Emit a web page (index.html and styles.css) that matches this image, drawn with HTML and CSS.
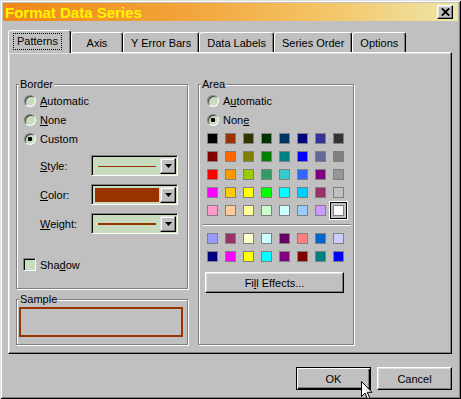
FILE: index.html
```html
<!DOCTYPE html>
<html lang="en">
<head>
    <meta charset="UTF-8">
    <title>Format Data Series</title>
    <link rel="stylesheet" href="styles.css">
</head>
<body>

    <div class="window">
        <!-- title bar -->
        <div class="titlebar">
            <span class="title">Format Data Series</span>
            <button class="close-btn">
                <svg width="9" height="8" viewBox="0 0 9 8"><path d="M0.8 0.3 L8.2 7.7 M8.2 0.3 L0.8 7.7" stroke="#000" stroke-width="1.8"/></svg>
            </button>
        </div>

        <div class="dialog">
            <div class="tabs">
                <div class="tab active"><span class="focus">Patterns</span></div>
                <div class="tab">Axis</div>
                <div class="tab">Y Error Bars</div>
                <div class="tab">Data Labels</div>
                <div class="tab">Series Order</div>
                <div class="tab">Options</div>
            </div>

            <div class="panel">
                <div class="col-left">
                    <fieldset class="group border-group">
                        <legend>Border</legend>
                        <div class="option"><span class="radio"></span><span><u>A</u>utomatic</span></div>
                        <div class="option"><span class="radio"></span><span><u>N</u>one</span></div>
                        <div class="option"><span class="radio checked"></span><span>Custom</span></div>

                        <div class="field-row first">
                            <span class="field-label"><u>S</u>tyle:</span>
                            <div class="combo">
                                <span class="combo-value"><span class="line thin"></span></span>
                                <span class="combo-btn"><svg width="7" height="4" viewBox="0 0 7 4"><polygon points="0,0 7,0 3.5,4" fill="#000"/></svg></span>
                            </div>
                        </div>
                        <div class="field-row">
                            <span class="field-label"><u>C</u>olor:</span>
                            <div class="combo">
                                <span class="combo-value"><span class="fill"></span></span>
                                <span class="combo-btn"><svg width="7" height="4" viewBox="0 0 7 4"><polygon points="0,0 7,0 3.5,4" fill="#000"/></svg></span>
                            </div>
                        </div>
                        <div class="field-row">
                            <span class="field-label"><u>W</u>eight:</span>
                            <div class="combo">
                                <span class="combo-value"><span class="line thick"></span></span>
                                <span class="combo-btn"><svg width="7" height="4" viewBox="0 0 7 4"><polygon points="0,0 7,0 3.5,4" fill="#000"/></svg></span>
                            </div>
                        </div>

                        <div class="option check-row"><span class="checkbox"></span><span>Sha<u>d</u>ow</span></div>
                    </fieldset>

                    <fieldset class="group sample-group">
                        <legend>Sample</legend>
                        <div class="sample"></div>
                    </fieldset>
                </div>

                <fieldset class="group area-group">
                    <legend>Area</legend>
                    <div class="option"><span class="radio"></span><span>A<u>u</u>tomatic</span></div>
                    <div class="option"><span class="radio checked"></span><span>Non<u>e</u></span></div>

                    <div class="swatches" id="main-colors"></div>
                    <div class="separator"></div>
                    <div class="swatches extra" id="extra-colors"></div>

                    <button class="btn fill-btn">Fi<u>l</u>l Effects...</button>
                </fieldset>
            </div>

            <div class="actions">
                <button class="btn default">OK</button>
                <button class="btn">Cancel</button>
            </div>
        </div>

        <!-- mouse pointer sitting over the OK button -->
        <svg class="cursor" width="12" height="19" viewBox="0 0 12 19">
            <path d="M0.5 0.5 V15.5 L4 12 L6.5 17.8 L8.7 16.9 L6.3 11.3 H11 Z" fill="#fff" stroke="#000" stroke-width="1"/>
        </svg>
    </div>

    <script>
        // Excel 56 colour palette, 5 rows + 2 chart rows
        const mainColors = [
            '#000000', '#993300', '#333300', '#003300', '#003366', '#000080', '#333399', '#333333',
            '#800000', '#FF6600', '#808000', '#008000', '#008080', '#0000FF', '#666699', '#808080',
            '#FF0000', '#FF9900', '#99CC00', '#339966', '#33CCCC', '#3366FF', '#800080', '#969696',
            '#FF00FF', '#FFCC00', '#FFFF00', '#00FF00', '#00FFFF', '#00CCFF', '#993366', '#C0C0C0',
            '#FF99CC', '#FFCC99', '#FFFF99', '#CCFFCC', '#CCFFFF', '#99CCFF', '#CC99FF', '#FFFFFF'
        ];
        const extraColors = [
            '#9999FF', '#993366', '#FFFFCC', '#CCFFFF', '#660066', '#FF8080', '#0066CC', '#CCCCFF',
            '#000080', '#FF00FF', '#FFFF00', '#00FFFF', '#800080', '#800000', '#008080', '#0000FF'
        ];

        function fillSwatches(containerId, colors, selected) {
            const box = document.getElementById(containerId);
            colors.forEach((color, i) => {
                const sw = document.createElement('span');
                sw.className = 'swatch';
                if (i === selected) sw.classList.add('selected');
                sw.style.background = color;
                box.appendChild(sw);
            });
        }

        fillSwatches('main-colors', mainColors, 39);
        fillSwatches('extra-colors', extraColors, -1);
    </script>

</body>
</html>
```

FILE: styles.css
```css
* {
    box-sizing: border-box;
}

body {
    margin: 0;
    font-family: "Liberation Sans", Arial, sans-serif;
    font-size: 11px;
    color: #000;
    background-color: #c0c0c0;
}

/* Outer window frame */
.window {
    position: relative;
    width: 461px;
    height: 399px;
    padding: 3px;
    background-color: #c0c0c0;
    box-shadow: inset 1px 1px 0 #dfdfdf, inset -1px -1px 0 #000,
                inset 2px 2px 0 #fff, inset -2px -2px 0 #808080;
    display: flex;
    flex-direction: column;
}

.titlebar {
    height: 18px;
    display: flex;
    align-items: center;
    justify-content: space-between;
    padding-left: 2px;
    background: linear-gradient(to right, #ef8818 0%, #f2a43a 40%, #f4c465 70%, #ede6a8 100%);
}

.title {
    font-size: 15px;
    font-weight: bold;
    color: #fff200;
}

.close-btn {
    width: 16px;
    height: 14px;
    margin-right: 5px;
    padding: 0;
    display: flex;
    align-items: center;
    justify-content: center;
    background-color: #c0c0c0;
    border: 1px solid;
    border-color: #fff #000 #000 #fff;
    box-shadow: inset -1px -1px 0 #808080, inset 1px 1px 0 #dfdfdf;
}

.dialog {
    flex: 1;
    padding: 9px 6px 0 5px;
}

/* --- Tabs --- */
.tabs {
    display: flex;
    align-items: flex-end;
    height: 22px;
}

.tab {
    height: 20px;
    min-width: 52px;
    padding: 0 7px;
    display: flex;
    align-items: center;
    justify-content: center;
    white-space: nowrap;
    border: 1px solid;
    border-bottom: none;
    border-color: #fff #000 transparent #fff;
    border-radius: 3px 3px 0 0;
    box-shadow: inset -1px 0 0 #808080;
}

.tab.active {
    position: relative;
    z-index: 2;
    height: 23px;
    min-width: 61px;
    margin-bottom: -1px;
    padding: 0 8px 2px 4px;
    justify-content: flex-start;
    background-color: #c0c0c0;
}

.focus {
    border: 1px dotted #000;
    padding: 1px 3px;
    line-height: 13px;
}

/* --- Tab panel --- */
.panel {
    position: relative;
    display: flex;
    gap: 10px;
    padding: 25px 0 8px 7px;
    border: 1px solid;
    border-color: #fff #000 #000 #fff;
    box-shadow: inset -1px -1px 0 #808080, inset 1px 1px 0 #dfdfdf;
}

.col-left {
    width: 172px;
    display: flex;
    flex-direction: column;
}

/* Etched group boxes */
.group {
    margin: 0;
    min-width: 0;
    border: 1px solid #808080;
    box-shadow: inset 1px 1px 0 #fff, 1px 1px 0 #fff;
}

.group legend {
    padding: 0 1px;
    line-height: 13px;
    background-color: #c0c0c0;
}

.border-group {
    padding: 0 7px 17px 7px;
}

.border-group legend {
    margin-left: -5px;
}

.sample-group {
    margin-top: 4px;
    padding: 1px 4px 7px 2px;
}

.sample {
    height: 30px;
    border: 2px solid #993300;
}

.area-group {
    width: 156px;
    padding: 0 8px;
}

.area-group legend {
    margin-left: -6px;
}

/* Radio / checkbox rows */
.option {
    height: 19px;
    display: flex;
    align-items: center;
    gap: 4px;
    white-space: nowrap;
}

.radio {
    flex: none;
    width: 12px;
    height: 12px;
    border-radius: 50%;
    background-color: #c8dcc0;
    border: 1px solid;
    border-color: #808080 #fff #fff #808080;
    box-shadow: inset 1px 1px 0 #404040;
}

.radio.checked {
    background: radial-gradient(circle at 50% 50%, #000 0, #000 2px, #c8dcc0 2.5px);
}

.check-row {
    height: 13px;
    margin-top: 24px;
    margin-left: -1px;
    gap: 4px;
}

.checkbox {
    flex: none;
    width: 13px;
    height: 13px;
    background-color: #c8dcc0;
    border: 1px solid;
    border-color: #808080 #fff #fff #808080;
    box-shadow: inset 1px 1px 0 #000;
}

/* Style / Color / Weight drop-downs */
.field-row {
    display: flex;
    align-items: center;
    margin-left: 16px;
    margin-top: 8px;
}

.field-row.first {
    margin-top: 7px;
}

.field-label {
    width: 51px;
}

.combo {
    width: 87px;
    height: 21px;
    display: flex;
    padding: 2px 1px 1px 2px;
    background-color: #c8dcc0;
    border: 1px solid;
    border-color: #808080 #fff #fff #808080;
    box-shadow: inset 1px 1px 0 #000;
}

.combo-value {
    flex: 1;
    display: flex;
    align-items: center;
    padding: 0 4px;
}

.line {
    flex: 1;
    background-color: #993300;
}

.line.thin {
    height: 1px;
}

.line.thick {
    height: 2px;
}

.combo-value .fill {
    flex: 1;
    height: 14px;
    margin: 0 -3px;
    background-color: #993300;
}

.combo-btn {
    width: 16px;
    display: flex;
    align-items: center;
    justify-content: center;
    background-color: #c0c0c0;
    border: 1px solid;
    border-color: #dfdfdf #000 #000 #dfdfdf;
    box-shadow: inset -1px -1px 0 #808080, inset 1px 1px 0 #fff;
}

/* Colour palette */
.swatches {
    display: grid;
    grid-template-columns: repeat(8, 11px);
    gap: 7px;
    margin-top: 4px;
}

.swatches.extra {
    margin-top: 7px;
}

.swatch {
    width: 11px;
    height: 11px;
    border: 1px solid #808080;
}

.swatch.selected {
    box-shadow: 0 0 0 2px #c0c0c0, 0 0 0 3px #000, 0 0 0 4px #fff;
}

.separator {
    height: 2px;
    margin: 8px -6px 0 -4px;
    border-top: 1px solid #808080;
    border-bottom: 1px solid #fff;
}

/* Push buttons */
.btn {
    font: inherit;
    color: #000;
    padding: 0;
    background-color: #c0c0c0;
    border: 1px solid;
    border-color: #fff #000 #000 #fff;
    box-shadow: inset -1px -1px 0 #808080, inset 1px 1px 0 #dfdfdf;
}

.btn.default {
    border-color: #000;
    box-shadow: inset 1px 1px 0 #fff, inset -1px -1px 0 #000, inset -2px -2px 0 #808080;
}

.fill-btn {
    width: 139px;
    height: 21px;
    margin-top: 10px;
    margin-left: -2px;
}

.actions {
    display: flex;
    justify-content: flex-end;
    gap: 6px;
    margin-top: 13px;
}

.actions .btn {
    width: 75px;
    height: 23px;
}

.cursor {
    position: absolute;
    left: 361px;
    top: 381px;
}
```
